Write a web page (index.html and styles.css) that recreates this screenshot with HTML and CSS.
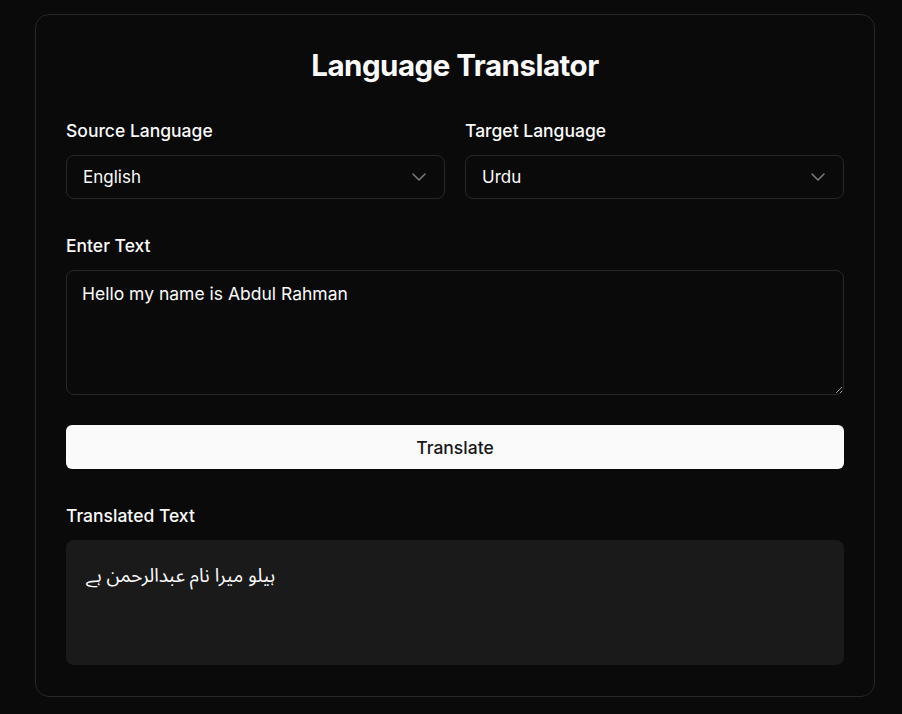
FILE: index.html
```html
<!DOCTYPE html>
<html lang="en">
<head>
<meta charset="utf-8">
<title>Language Translator</title>
<link rel="stylesheet" href="styles.css">
</head>
<body>
<main class="card">
  <h1 class="title">Language Translator</h1>
  <div class="row">
    <div class="field">
      <label class="label">Source Language</label>
      <div class="select"><span>English</span>
        <svg class="chev" width="24" height="24" viewBox="0 0 24 24" fill="none" stroke="currentColor" stroke-width="1.5" stroke-linecap="round" stroke-linejoin="round"><path d="m6 9 6 6 6-6"/></svg>
      </div>
    </div>
    <div class="field">
      <label class="label">Target Language</label>
      <div class="select"><span>Urdu</span>
        <svg class="chev" width="24" height="24" viewBox="0 0 24 24" fill="none" stroke="currentColor" stroke-width="1.5" stroke-linecap="round" stroke-linejoin="round"><path d="m6 9 6 6 6-6"/></svg>
      </div>
    </div>
  </div>
  <div class="field field-input">
    <label class="label">Enter Text</label>
    <textarea class="textarea">Hello my name is Abdul Rahman</textarea>
  </div>
  <button class="btn">Translate</button>
  <div class="field field-output">
    <label class="label">Translated Text</label>
    <div class="output"><span class="urdu">ہیلو میرا نام عبدالرحمن ہے</span></div>
  </div>
</main>
</body>
</html>
```
FILE: styles.css
```css
* { box-sizing: border-box; }
html, body { margin: 0; padding: 0; }
body {
  background: #0a0a0a;
  color: #fafafa;
  font-family: Inter, "Noto Sans", sans-serif;
  padding: 14px 27px 18px 35px;
}
.card {
  width: 840px;
  border: 1px solid #27272a;
  border-radius: 14px;
  padding: 32px 30px 31px 30px;
  display: flex;
  flex-direction: column;
}
.title {
  margin: 0 0 36px;
  text-align: center;
  font-size: 29.5px;
  line-height: 36px;
  font-weight: 700;
  letter-spacing: -0.5px;
}
.row {
  display: grid;
  grid-template-columns: 1fr 1fr;
  gap: 20px;
}
.field { display: flex; flex-direction: column; gap: 12px; }
.field-input { margin-top: 35px; }
.field-output { margin-top: 35px; }
.label {
  font-size: 17.5px;
  line-height: 24px;
  font-weight: 500;
}
.select {
  height: 44px;
  border: 1px solid #27272a;
  border-radius: 8px;
  padding: 0 13px 0 16px;
  display: flex;
  align-items: center;
  justify-content: space-between;
  font-size: 17px;
}
.chev { color: #a1a1aa; opacity: .75; }
.textarea {
  height: 125px;
  background: transparent;
  border: 1px solid #27272a;
  border-radius: 8px;
  color: #fafafa;
  font-family: Inter, sans-serif;
  font-size: 17.5px;
  line-height: 24px;
  padding: 11px 15px;
  resize: vertical;
  outline: none;
}
.btn {
  margin-top: 30px;
  height: 44px;
  border: 0;
  border-radius: 6px;
  background: #fafafa;
  color: #18181b;
  font-family: Inter, sans-serif;
  font-weight: 500;
  font-size: 17.5px;
  cursor: pointer;
}
.output {
  height: 125px;
  background: #1a1a1a;
  border-radius: 8px;
  padding: 22px 20px 20px;
}
.urdu {
  font-family: "Noto Sans Arabic", "DejaVu Sans", sans-serif;
  font-size: 19px;
  line-height: 28px;
  direction: rtl;
  unicode-bidi: isolate;
  display: inline-block;
}
```
